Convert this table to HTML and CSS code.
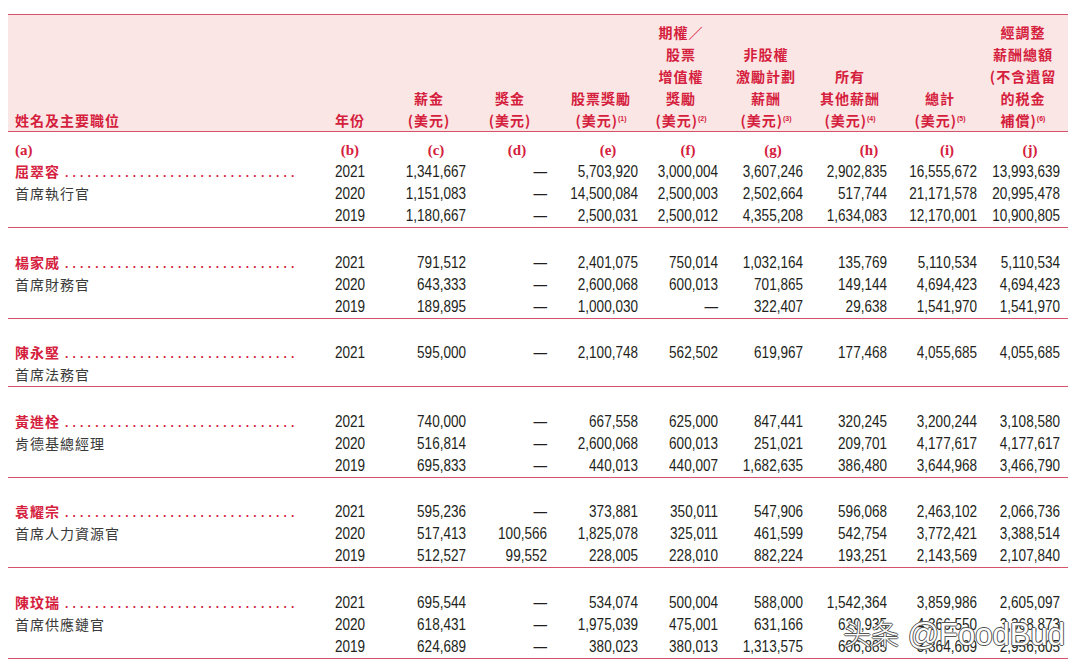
FILE: index.html
```html
<!DOCTYPE html>
<html lang="zh-Hant">
<head>
<meta charset="utf-8">
<title>薪酬表</title>
<link rel="stylesheet" href="styles.css">
</head>
<body>
<div class="page">
  <div class="table">
    <div class="head grid">
      <div class="hn">姓名及主要職位</div>
      <div class="hy">年份</div>
      <div class="hc">薪金<br>(美元)</div>
      <div class="hc">獎金<br>(美元)</div>
      <div class="hc">股票獎勵<br>(美元)<sup class="fn">(1)</sup></div>
      <div class="hc">期權／<br>股票<br>增值權<br>獎勵<br>(美元)<sup class="fn">(2)</sup></div>
      <div class="hc">非股權<br>激勵計劃<br>薪酬<br>(美元)<sup class="fn">(3)</sup></div>
      <div class="hc">所有<br>其他薪酬<br>(美元)<sup class="fn">(4)</sup></div>
      <div class="hc">總計<br>(美元)<sup class="fn">(5)</sup></div>
      <div class="hc">經調整<br>薪酬總額<br>(不含遺留<br>的税金<br>補償)<sup class="fn">(6)</sup></div>
    </div>

    <div class="group first">
      <div class="grid letters">
        <div class="la">(a)</div>
        <div class="lb">(b)</div>
        <div class="lc">(c)</div>
        <div class="lc">(d)</div>
        <div class="lc">(e)</div>
        <div class="lc">(f)</div>
        <div class="lc">(g)</div>
        <div class="lc lh">(h)</div>
        <div class="lc">(i)</div>
        <div class="lc">(j)</div>
      </div>
      <div class="grid row">
        <div class="name"><span class="nm">屈翠容</span><span class="dots">...............................</span></div>
        <div class="n">2021</div><div class="n">1,341,667</div><div class="n">—</div><div class="n">5,703,920</div><div class="n">3,000,004</div><div class="n">3,607,246</div><div class="n">2,902,835</div><div class="n">16,555,672</div><div class="n">13,993,639</div>
      </div>
      <div class="grid row">
        <div class="title">首席執行官</div>
        <div class="n">2020</div><div class="n">1,151,083</div><div class="n">—</div><div class="n">14,500,084</div><div class="n">2,500,003</div><div class="n">2,502,664</div><div class="n">517,744</div><div class="n">21,171,578</div><div class="n">20,995,478</div>
      </div>
      <div class="grid row">
        <div class="title"></div>
        <div class="n">2019</div><div class="n">1,180,667</div><div class="n">—</div><div class="n">2,500,031</div><div class="n">2,500,012</div><div class="n">4,355,208</div><div class="n">1,634,083</div><div class="n">12,170,001</div><div class="n">10,900,805</div>
      </div>
    </div>

    <div class="group">
      <div class="grid row">
        <div class="name"><span class="nm">楊家威</span><span class="dots">...............................</span></div>
        <div class="n">2021</div><div class="n">791,512</div><div class="n">—</div><div class="n">2,401,075</div><div class="n">750,014</div><div class="n">1,032,164</div><div class="n">135,769</div><div class="n">5,110,534</div><div class="n">5,110,534</div>
      </div>
      <div class="grid row">
        <div class="title">首席財務官</div>
        <div class="n">2020</div><div class="n">643,333</div><div class="n">—</div><div class="n">2,600,068</div><div class="n">600,013</div><div class="n">701,865</div><div class="n">149,144</div><div class="n">4,694,423</div><div class="n">4,694,423</div>
      </div>
      <div class="grid row">
        <div class="title"></div>
        <div class="n">2019</div><div class="n">189,895</div><div class="n">—</div><div class="n">1,000,030</div><div class="n">—</div><div class="n">322,407</div><div class="n">29,638</div><div class="n">1,541,970</div><div class="n">1,541,970</div>
      </div>
    </div>

    <div class="group">
      <div class="grid row">
        <div class="name"><span class="nm">陳永堅</span><span class="dots">...............................</span></div>
        <div class="n">2021</div><div class="n">595,000</div><div class="n">—</div><div class="n">2,100,748</div><div class="n">562,502</div><div class="n">619,967</div><div class="n">177,468</div><div class="n">4,055,685</div><div class="n">4,055,685</div>
      </div>
      <div class="grid row">
        <div class="title">首席法務官</div>
      </div>
    </div>

    <div class="group">
      <div class="grid row">
        <div class="name"><span class="nm">黃進栓</span><span class="dots">...............................</span></div>
        <div class="n">2021</div><div class="n">740,000</div><div class="n">—</div><div class="n">667,558</div><div class="n">625,000</div><div class="n">847,441</div><div class="n">320,245</div><div class="n">3,200,244</div><div class="n">3,108,580</div>
      </div>
      <div class="grid row">
        <div class="title">肯德基總經理</div>
        <div class="n">2020</div><div class="n">516,814</div><div class="n">—</div><div class="n">2,600,068</div><div class="n">600,013</div><div class="n">251,021</div><div class="n">209,701</div><div class="n">4,177,617</div><div class="n">4,177,617</div>
      </div>
      <div class="grid row">
        <div class="title"></div>
        <div class="n">2019</div><div class="n">695,833</div><div class="n">—</div><div class="n">440,013</div><div class="n">440,007</div><div class="n">1,682,635</div><div class="n">386,480</div><div class="n">3,644,968</div><div class="n">3,466,790</div>
      </div>
    </div>

    <div class="group">
      <div class="grid row">
        <div class="name"><span class="nm">袁耀宗</span><span class="dots">...............................</span></div>
        <div class="n">2021</div><div class="n">595,236</div><div class="n">—</div><div class="n">373,881</div><div class="n">350,011</div><div class="n">547,906</div><div class="n">596,068</div><div class="n">2,463,102</div><div class="n">2,066,736</div>
      </div>
      <div class="grid row">
        <div class="title">首席人力資源官</div>
        <div class="n">2020</div><div class="n">517,413</div><div class="n">100,566</div><div class="n">1,825,078</div><div class="n">325,011</div><div class="n">461,599</div><div class="n">542,754</div><div class="n">3,772,421</div><div class="n">3,388,514</div>
      </div>
      <div class="grid row">
        <div class="title"></div>
        <div class="n">2019</div><div class="n">512,527</div><div class="n">99,552</div><div class="n">228,005</div><div class="n">228,010</div><div class="n">882,224</div><div class="n">193,251</div><div class="n">2,143,569</div><div class="n">2,107,840</div>
      </div>
    </div>

    <div class="group">
      <div class="grid row">
        <div class="name"><span class="nm">陳玟瑞</span><span class="dots">...............................</span></div>
        <div class="n">2021</div><div class="n">695,544</div><div class="n">—</div><div class="n">534,074</div><div class="n">500,004</div><div class="n">588,000</div><div class="n">1,542,364</div><div class="n">3,859,986</div><div class="n">2,605,097</div>
      </div>
      <div class="grid row">
        <div class="title">首席供應鏈官</div>
        <div class="n">2020</div><div class="n">618,431</div><div class="n">—</div><div class="n">1,975,039</div><div class="n">475,001</div><div class="n">631,166</div><div class="n">620,935</div><div class="n">4,366,550</div><div class="n">3,368,873</div>
      </div>
      <div class="grid row">
        <div class="title"></div>
        <div class="n">2019</div><div class="n">624,689</div><div class="n">—</div><div class="n">380,023</div><div class="n">380,013</div><div class="n">1,313,575</div><div class="n">606,885</div><div class="n">3,364,669</div><div class="n">2,956,605</div>
      </div>
    </div>
  </div>
  <div class="watermark"><span class="wm-cn">头条</span> @FoodBud</div>
</div>
</body>
</html>
```

FILE: styles.css
```css
html, body {
  margin: 0;
  padding: 0;
  background: #ffffff;
}

.page {
  position: relative;
  width: 1080px;
  height: 671px;
  padding: 14px 12px 0 8px;
  box-sizing: border-box;
  overflow: hidden;
}

.table {
  width: 1060px;
  padding-right: 8px;
  box-sizing: border-box;
}

.grid {
  display: grid;
  grid-template-columns: 292px 65px 101px 81px 91px 80px 85px 84px 90px 83px;
}

/* header */
.head {
  background: #fae6e4;
  border-top: 1.5px solid #d4526a;
  border-bottom: 1.5px solid #d4526a;
  padding-top: 6px;
  margin-right: -8px;
  padding-right: 8px;
  align-items: end;
  font-family: "Noto Sans CJK TC", "Noto Sans CJK SC", sans-serif;
  font-weight: 700;
  font-size: 14px;
  line-height: 22px;
  letter-spacing: 1px;
  color: #d5203d;
}

.hn {
  padding-left: 7px;
}

.hy {
  justify-self: end;
}

.hc {
  justify-self: end;
  width: 74px;
  text-align: center;
  white-space: nowrap;
}

.fn {
  font-family: "Liberation Sans", sans-serif;
  font-size: 7px;
  font-weight: 700;
  letter-spacing: 0;
  vertical-align: 5px;
  line-height: 0;
}

/* groups */
.group {
  border-bottom: 1.5px solid #d4526a;
  margin-right: -8px;
  padding-right: 8px;
  padding-top: 22.5px;
  padding-bottom: 1px;
}

.group.first {
  padding-top: 8px;
}

.letters {
  height: 20px;
  line-height: 20px;
  font-family: "Liberation Serif", serif;
  font-weight: 700;
  font-size: 15px;
  color: #d5203d;
}

.la {
  padding-left: 7px;
}

.lb {
  justify-self: end;
  padding-right: 6px;
}

.lc {
  justify-self: end;
  width: 60px;
  text-align: center;
}

.lh {
  width: 36px;
}

.row {
  height: 22px;
  line-height: 22px;
}

/* condensed figures (Arial Narrow proportions) */
.n {
  text-align: right;
  font-family: "Liberation Sans", Arial, sans-serif;
  font-size: 16.5px;
  color: #231f20;
  white-space: nowrap;
  transform: scaleX(0.82);
  transform-origin: right center;
}

.name {
  display: flex;
  align-items: baseline;
  padding-left: 7px;
  white-space: nowrap;
}

.nm {
  font-family: "Noto Sans CJK TC", "Noto Sans CJK SC", sans-serif;
  font-weight: 700;
  font-size: 14px;
  letter-spacing: 1px;
  color: #d5203d;
}

.dots {
  margin-left: 5px;
  font-family: "Liberation Sans", sans-serif;
  font-weight: 700;
  font-size: 12px;
  letter-spacing: 4.2px;
  color: #d5203d;
}

.title {
  padding-left: 7px;
  font-family: "Noto Sans CJK TC", "Noto Sans CJK SC", sans-serif;
  font-size: 14px;
  letter-spacing: 1px;
  color: #3a3a3a;
  white-space: nowrap;
}

/* watermark overlay */
.watermark {
  position: absolute;
  left: 843px;
  top: 613px;
  font-family: "Liberation Sans", sans-serif;
  font-weight: 400;
  font-size: 31px;
  line-height: 40px;
  color: #ffffff;
  white-space: nowrap;
  text-shadow: -1px 0 #555, 1px 0 #555, 0 -1px #555, 0 1px #555;
}

.wm-cn {
  font-family: "Noto Sans CJK SC", sans-serif;
  font-weight: 300;
  font-size: 28px;
}
```
